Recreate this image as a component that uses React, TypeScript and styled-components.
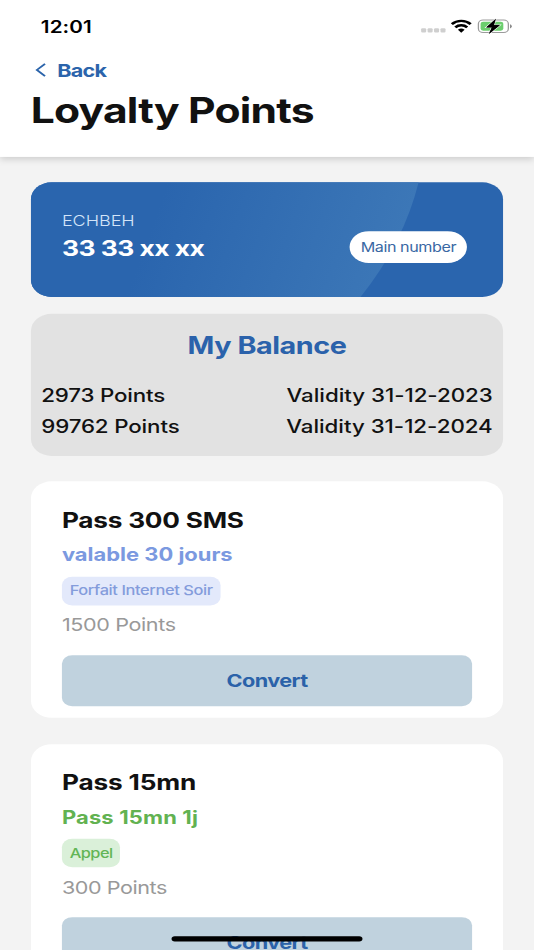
import React from "react";
import styled, { createGlobalStyle } from "styled-components";

const GlobalStyle = createGlobalStyle`
  *, *::before, *::after { box-sizing: border-box; }
  html, body { margin: 0; padding: 0; background: #f3f3f3; overflow: hidden; }
  body { font-family: Inter, "Liberation Sans", sans-serif; }
`;

const Viewport = styled.div`
  width: 534px;
  height: 950px;
  overflow: hidden;
`;

const Screen = styled.div`
  position: relative;
  width: 414px;
  height: 896px;
  overflow: hidden;
  background: #f3f3f3;
  color: #111;
  transform: scale(1.28986, 1.06027);
  transform-origin: 0 0;
`;

const Text = styled.span<{ $ls?: number }>`
  display: block;
  white-space: nowrap;
  letter-spacing: ${(p) => p.$ls ?? 0}px;
`;

const Header = styled.header`
  height: 148px;
  background: #fff;
  box-shadow: 0 2px 6px rgba(0, 0, 0, 0.17);
`;

const StatusBar = styled.div`
  display: flex;
  align-items: center;
  justify-content: space-between;
  height: 44.4px;
  padding: 5.4px 17px 0 31.7px;
`;

const Clock = styled(Text)`
  font-size: 16px;
  line-height: 20px;
  font-weight: 600;
  color: #000;
`;

const StatusIcons = styled.svg`
  display: block;
  width: 72px;
  height: 16px;
`;

const BackLink = styled.button`
  display: flex;
  align-items: center;
  gap: 8.3px;
  height: 24px;
  margin: 10px 0 0 27px;
  padding: 0;
  border: 0;
  background: none;
  color: #2b64ab;
  font-family: inherit;
`;

const BackIcon = styled.svg`
  display: block;
  width: 9px;
  height: 14px;
`;

const BackLabel = styled(Text)`
  padding-top: 1px;
  font-size: 16.7px;
  line-height: 24px;
  font-weight: 700;
`;

const Title = styled.h1<{ $ls: number }>`
  margin: 5.8px 0 0 23.8px;
  font-size: 33px;
  line-height: 40px;
  font-weight: 700;
  white-space: nowrap;
  letter-spacing: ${(p) => p.$ls}px;
`;

const Content = styled.main`
  display: flex;
  flex-direction: column;
  padding: 24px 24px 0;
`;

const NumberCard = styled.section`
  position: relative;
  display: flex;
  justify-content: space-between;
  height: 108px;
  padding: 26px 28px 0 24px;
  border-radius: 16px;
  background: #2a65ae;
  overflow: hidden;
`;

const CardArc = styled.svg`
  position: absolute;
  inset: 0;
  width: 366px;
  height: 108px;
`;

const Owner = styled.div`
  position: relative;
`;

const OwnerName = styled(Text)`
  font-size: 14px;
  line-height: 20px;
  font-weight: 300;
  color: #d3e4f8;
`;

const PhoneNumber = styled(Text)`
  margin-top: 1.9px;
  font-size: 20.5px;
  line-height: 28px;
  font-weight: 700;
  color: #fff;
`;

const Pill = styled.div`
  position: relative;
  display: flex;
  align-items: center;
  justify-content: center;
  width: 90.8px;
  height: 30px;
  margin-top: 20px;
  border-radius: 15px;
  background: #fff;
  color: #3968a3;
  font-size: 12.5px;
`;

const BalanceCard = styled.section`
  height: 133.8px;
  margin-top: 16.2px;
  padding: 16px 8px 0;
  border-radius: 16px;
  background: #e2e2e2;
`;

const BalanceTitle = styled.h2<{ $ls: number }>`
  margin: 0 0 19px;
  font-size: 22.3px;
  line-height: 28px;
  font-weight: 700;
  text-align: center;
  color: #2b62ab;
  letter-spacing: ${(p) => p.$ls}px;
`;

const BalanceRow = styled.div`
  display: flex;
  justify-content: space-between;
  height: 28.9px;
  font-size: 17.3px;
  line-height: 28.9px;
  font-weight: 500;
`;

const OfferCard = styled.article`
  height: 223px;
  margin-top: 24.4px;
  padding: 22.6px 24px 0;
  border-radius: 16px;
  background: #fff;
`;

const OfferName = styled(Text)`
  font-size: 20.3px;
  line-height: 28px;
  font-weight: 700;
`;

const OfferDetail = styled(Text)<{ $color: string }>`
  margin-top: 6.2px;
  font-size: 17px;
  line-height: 24px;
  font-weight: 700;
  color: ${(p) => p.$color};
`;

const Chip = styled.div<{ $color: string; $bg: string }>`
  display: flex;
  align-items: center;
  width: fit-content;
  height: 26.8px;
  margin-top: 8.6px;
  padding: 0 6px 0.8px;
  border-radius: 8px;
  background: ${(p) => p.$bg};
  color: ${(p) => p.$color};
  font-size: 12.7px;
  font-weight: 500;
`;

const Price = styled(Text)`
  margin-top: 6.7px;
  font-size: 16.7px;
  line-height: 24px;
  color: #999;
`;

const ConvertButton = styled.button`
  display: flex;
  align-items: center;
  justify-content: center;
  width: 100%;
  height: 48px;
  margin-top: 16.6px;
  padding: 0;
  border: 0;
  border-radius: 8px;
  background: #c0d2de;
  color: #2b62a9;
  font-family: inherit;
  font-size: 16.8px;
  font-weight: 700;
`;

const HomeIndicator = styled.div`
  position: absolute;
  left: 133px;
  bottom: 8px;
  width: 148px;
  height: 5px;
  border-radius: 2.5px;
  background: #000;
`;

const balances = [
  { points: "2973 Points", validity: "Validity 31-12-2023", ls: [-0.14, -0.02] },
  { points: "99762 Points", validity: "Validity 31-12-2024", ls: [-0.1, -0.02] },
];

const offers = [
  {
    name: "Pass 300 SMS",
    detail: "valable 30 jours",
    chip: "Forfait Internet Soir",
    price: "1500 Points",
    color: "#7b99e0",
    chipColor: "#849cdb",
    chipBg: "#e3e9fb",
    ls: [-0.16, 0, -0.29, -0.28],
  },
  {
    name: "Pass 15mn",
    detail: "Pass 15mn 1j",
    chip: "Appel",
    price: "300 Points",
    color: "#62b251",
    chipColor: "#62b556",
    chipBg: "#daf0d9",
    ls: [-0.1, 0.13, -0.4, -0.33],
  },
];

export default function App() {
  return (
    <Viewport>
      <GlobalStyle />
      <Screen>
        <Header>
          <StatusBar>
            <Clock $ls={0.05}>12:01</Clock>
            <StatusIcons viewBox="0 0 72 16">
              <g fill="#cfcfcf">
                <rect x="1.5" y="9.6" width="3.9" height="4" rx="1" />
                <rect x="6.5" y="9.6" width="3.9" height="4" rx="1" />
                <rect x="11.5" y="9.6" width="3.9" height="4" rx="1" />
                <rect x="16.5" y="9.6" width="3.9" height="4" rx="1" />
              </g>
              <g fill="none" stroke="#000" strokeWidth="2.3">
                <path d="M25.3 5.7a10.3 10.3 0 0 1 14.6 0" />
                <path d="M28 8.8a6.5 6.5 0 0 1 9.2 0" />
              </g>
              <path d="M32.6 13.8l-2.6-2.7a3.7 3.7 0 0 1 5.2 0z" fill="#000" />
              <rect x="45.9" y="1.8" width="23.2" height="11.8" rx="3.6" fill="none" stroke="#9b9b9b" />
              <path d="M70.4 5.8v4q1.4-.6 1.4-2t-1.4-2z" fill="#8b8b8b" />
              <rect x="47.6" y="3.5" width="17.6" height="8.4" rx="2" fill="#6cce6e" />
              <path
                d="M59.2 1.2l-7 7.6h4.3l-2.2 5.8 8-7.8h-4.6z"
                fill="#000"
                stroke="#fff"
                strokeWidth="1.4"
                paintOrder="stroke"
              />
              <path d="M59.2 1.2l-7 7.6h4.3l-2.2 5.8 8-7.8h-4.6z" stroke="#000" strokeWidth=".4" />
            </StatusIcons>
          </StatusBar>
          <BackLink>
            <BackIcon viewBox="0 0 9 14" fill="none" stroke="currentColor" strokeWidth="1.6">
              <path d="M7.9 1.2L1.6 7l6.3 5.8" />
            </BackIcon>
            <BackLabel $ls={-0.55}>Back</BackLabel>
          </BackLink>
          <Title $ls={-0.62}>Loyalty Points</Title>
        </Header>

        <Content>
          <NumberCard>
            <CardArc viewBox="0 0 366 108">
              <defs>
                <linearGradient id="arc" gradientUnits="userSpaceOnUse" x1="100" y1="20" x2="300" y2="80">
                  <stop offset="0" stopColor="#2a65ae" />
                  <stop offset="1" stopColor="#3e79b8" />
                </linearGradient>
              </defs>
              <circle cx="-3" cy="-63" r="310" fill="url(#arc)" />
            </CardArc>
            <Owner>
              <OwnerName $ls={-0.05}>ECHBEH</OwnerName>
              <PhoneNumber $ls={-0.42}>33 33 xx xx</PhoneNumber>
            </Owner>
            <Pill>
              <Text $ls={-0.33}>Main number</Text>
            </Pill>
          </NumberCard>

          <BalanceCard>
            <BalanceTitle $ls={-0.36}>My Balance</BalanceTitle>
            {balances.map((b) => (
              <BalanceRow key={b.validity}>
                <Text $ls={b.ls[0]}>{b.points}</Text>
                <Text $ls={b.ls[1]}>{b.validity}</Text>
              </BalanceRow>
            ))}
          </BalanceCard>

          {offers.map((o) => (
            <OfferCard key={o.name}>
              <OfferName $ls={o.ls[0]}>{o.name}</OfferName>
              <OfferDetail $ls={o.ls[1]} $color={o.color}>{o.detail}</OfferDetail>
              <Chip $color={o.chipColor} $bg={o.chipBg}>
                <Text $ls={o.ls[2]}>{o.chip}</Text>
              </Chip>
              <Price $ls={o.ls[3]}>{o.price}</Price>
              <ConvertButton>
                <Text $ls={-0.45}>Convert</Text>
              </ConvertButton>
            </OfferCard>
          ))}
        </Content>
        <HomeIndicator />
      </Screen>
    </Viewport>
  );
}
